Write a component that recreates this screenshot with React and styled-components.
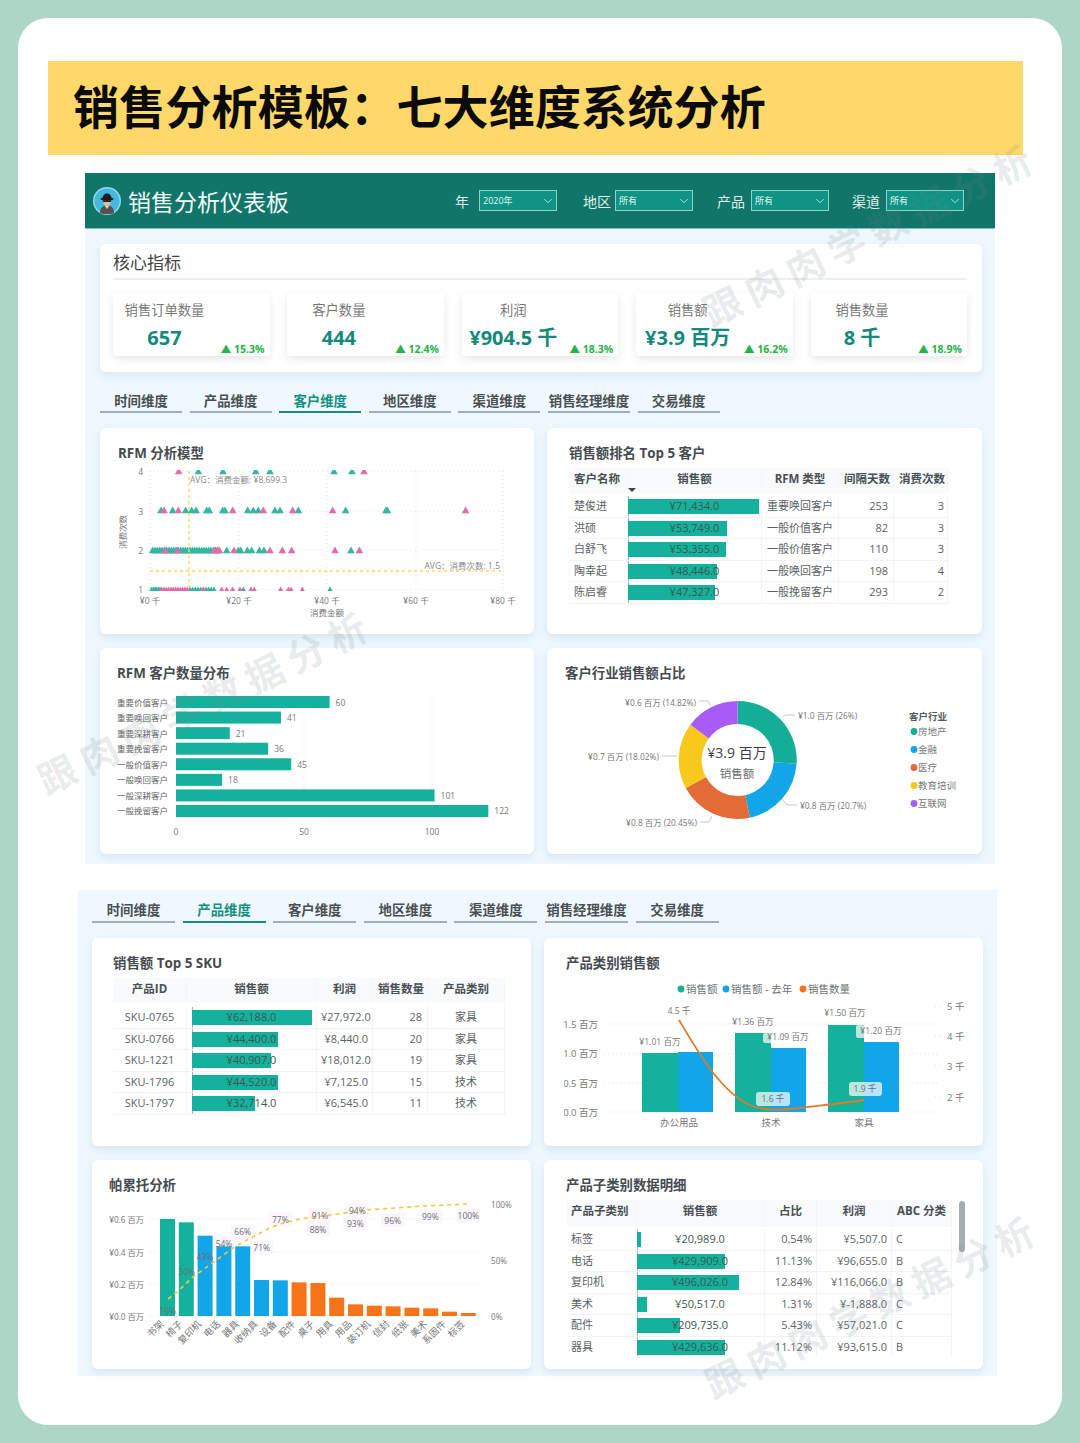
import React from "react";
import styled, { createGlobalStyle } from "styled-components";
import { ChevronDown } from "lucide-react";

const TEAL = "#14b29c";
const BLUE = "#12a5e8";
const ORANGE = "#f8741a";

const GlobalStyle = createGlobalStyle`
  html, body { margin: 0; padding: 0; }
  body {
    background: #aed6c6;
    font-family: "Open Sans", "Noto Sans CJK SC", sans-serif;
  }
`;

const Page = styled.div`
  position: relative;
  width: 1080px;
  height: 1443px;
  padding: 18px;
  box-sizing: border-box;
  overflow: hidden;
  background: #aed6c6;
`;

const Sheet = styled.div`
  width: 1044px;
  height: 1407px;
  box-sizing: border-box;
  padding: 43px 39px 0 30px;
  background: #fff;
  border-radius: 30px;
`;

const Banner = styled.h1`
  margin: 0;
  height: 94px;
  padding-left: 25px;
  background: #fed868;
  color: #0a0a0a;
  font-family: "Noto Sans CJK SC", sans-serif;
  font-size: 46px;
  font-weight: 700;
  letter-spacing: 0.2px;
  line-height: 86px;
  white-space: nowrap;
`;

const Dashboard = styled.section`
  box-sizing: border-box;
  width: ${(p) => p.$width}px;
  height: ${(p) => p.$height}px;
  margin-top: ${(p) => p.$top}px;
  margin-left: ${(p) => p.$left}px;
  background: #eff8fe;
`;

const TopBar = styled.header`
  display: flex;
  align-items: center;
  height: 56px;
  box-sizing: border-box;
  padding-left: 8px;
  background: #12756a;
  border-bottom: 1px solid #7cc4b8;
`;

const Logo = styled.svg`
  width: 28px;
  height: 28px;
  flex: none;
`;

const BoardTitle = styled.div`
  margin-left: 7px;
  width: 327px;
  color: #f2fbf9;
  font-size: 23px;
  line-height: 30px;
  font-family: "Noto Sans CJK SC", sans-serif;
  font-weight: 400;
`;

const Filters = styled.div`
  display: flex;
  align-items: center;
`;

const Filter = styled.div`
  display: flex;
  align-items: center;
  gap: ${(p) => p.$gap}px;
  margin-left: ${(p) => p.$left}px;
  color: #dff1ed;
  font-size: 14px;
`;

const Select = styled.div`
  display: flex;
  align-items: center;
  justify-content: space-between;
  width: 78px;
  height: 21px;
  box-sizing: border-box;
  padding: 0 1px 0 3px;
  background: #0f9384;
  border: 1px solid #8fd3c8;
  color: #e8f7f4;
  font-size: 9px;
`;

const Body = styled.div`
  padding: ${(p) => p.$pad};
`;

const CorePanel = styled.div`
  box-sizing: border-box;
  height: 128px;
  padding: 6px 15px 0 13px;
  background: #fff;
  border-radius: 5px;
  box-shadow: 0 4px 10px rgba(120, 160, 190, 0.18);
`;

const CoreTitle = styled.div`
  height: 28px;
  border-bottom: 2px solid #eceeef;
  color: #444;
  font-size: 17px;
  line-height: 26px;
`;

const KpiRow = styled.div`
  display: grid;
  grid-template-columns: repeat(5, 156.5px);
  justify-content: space-between;
  margin-top: 13px;
`;

const Kpi = styled.div`
  position: relative;
  height: 63px;
  background: #fff;
  border-radius: 3px;
  box-shadow: 0 3px 9px rgba(110, 130, 130, 0.18);
`;

const KpiMain = styled.div`
  display: flex;
  flex-direction: column;
  align-items: center;
  width: 103px;
  white-space: nowrap;
`;

const KpiLabel = styled.div`
  margin-top: 6px;
  color: #777;
  font-size: 13.3px;
  line-height: 22px;
`;

const KpiValue = styled.div`
  margin-top: 5px;
  color: #12897a;
  font-size: 20px;
  font-weight: 700;
  line-height: 24px;
`;

const KpiDelta = styled.div`
  position: absolute;
  right: 5px;
  bottom: 0;
  color: #28b24c;
  font-size: 10.5px;
  font-weight: 700;
  line-height: 14px;
  white-space: nowrap;
`;

const Tabs = styled.nav`
  display: grid;
  grid-template-columns: repeat(7, ${(p) => p.$tab}px);
  column-gap: 7.6px;
  margin-top: ${(p) => p.$top}px;
`;

const Tab = styled.div`
  height: ${(p) => p.$height}px;
  box-sizing: border-box;
  border-bottom: 2px solid ${(p) => (p.$active ? "#1a8f80" : "#a4afb5")};
  color: ${(p) => (p.$active ? "#14907f" : "#4a4f52")};
  font-size: 13.4px;
  font-weight: 700;
  line-height: ${(p) => p.$height - 3}px;
  text-align: center;
  white-space: nowrap;
`;

const CardGrid = styled.div`
  display: grid;
  grid-template-columns: ${(p) => p.$cols};
  grid-template-rows: ${(p) => p.$rows};
  column-gap: 13px;
  row-gap: 14px;
  margin-top: 15px;
`;

const Card = styled.div`
  position: relative;
  overflow: hidden;
  background: #fff;
  border-radius: 6px;
  box-shadow: 0 4px 10px rgba(120, 160, 190, 0.2);
`;

const CardTitle = styled.h3`
  margin: 15px 0 5px ${(p) => p.$left}px;
  height: 20px;
  color: #454b50;
  font-size: 13.4px;
  font-weight: 700;
  line-height: 20px;
  white-space: nowrap;
`;

const Chart = styled.svg`
  display: block;
  overflow: visible;
  font-family: "Open Sans", "Noto Sans CJK SC", sans-serif;
`;

const Label = styled.text`
  fill: ${(p) => p.$fill || "#777"};
  font-size: ${(p) => p.$size || 10}px;
  font-weight: ${(p) => p.$weight || 400};
  text-anchor: ${(p) => p.$anchor || "start"};
  dominant-baseline: central;
`;

const GridLine = styled.line`
  stroke: #dcdfe2;
  stroke-width: 1;
  stroke-dasharray: 1 3;
`;

const Table = styled.div`
  position: relative;
  width: ${(p) => p.$width}px;
  height: ${(p) => p.$height}px;
  margin-top: ${(p) => p.$top || 0}px;
  margin-left: ${(p) => p.$left}px;
  overflow: hidden;
`;

const HeadRow = styled.div`
  display: grid;
  grid-template-columns: ${(p) => p.$cols};
  height: ${(p) => p.$height || 25}px;
  margin-bottom: ${(p) => p.$gap}px;
  background: #f8fafc;
  color: #4a4f54;
  font-size: 11.5px;
  font-weight: 700;
  line-height: 22px;
`;

const Row = styled.div`
  display: grid;
  grid-template-columns: ${(p) => p.$cols};
  height: 21.5px;
  box-sizing: border-box;
  border-bottom: 1px solid #f1f4f6;
  color: #5c6266;
  font-size: 11px;
  line-height: 20.5px;
`;

const Cell = styled.div`
  position: relative;
  box-sizing: border-box;
  padding: 0 ${(p) => p.$pad ?? 5}px;
  border-right: 1px solid #f3f5f7;
  text-align: ${(p) => p.$align || "left"};
  white-space: nowrap;
`;

const SortMark = styled.span`
  position: absolute;
  left: 0;
  bottom: 1px;
  width: 0;
  height: 0;
  border-left: 4px solid transparent;
  border-right: 4px solid transparent;
  border-top: 4px solid #444;
`;

const BarCell = styled.div`
  position: relative;
  border-right: 1px solid #f3f5f7;
  text-align: center;
  white-space: nowrap;
  &::before {
    content: "";
    position: absolute;
    left: ${(p) => p.$inset}px;
    top: 0;
    bottom: 0;
    border-left: 1px dashed #aab0b3;
  }
`;

const Bar = styled.div`
  position: absolute;
  left: ${(p) => p.$inset}px;
  top: 3px;
  height: 15px;
  background: ${TEAL};
`;

const BarValue = styled.span`
  position: relative;
  color: #3f5552;
`;

const ScrollThumb = styled.div`
  position: absolute;
  left: 415px;
  top: 41px;
  width: 6px;
  height: 51px;
  border-radius: 3px;
  background: #a9adb0;
`;

const Watermark = styled.div`
  position: absolute;
  left: ${(p) => p.$x}px;
  top: ${(p) => p.$y}px;
  transform: translate(-50%, -50%) rotate(-26deg);
  color: rgba(110, 135, 135, 0.17);
  font-family: "Noto Sans CJK SC", sans-serif;
  font-size: 38px;
  font-weight: 700;
  letter-spacing: 8px;
  white-space: nowrap;
  pointer-events: none;
`;

const FILTERS = [
  { label: "年", value: "2020年", gap: 10, left: 0 },
  { label: "地区", value: "所有", gap: 4, left: 26 },
  { label: "产品", value: "所有", gap: 6, left: 24 },
  { label: "渠道", value: "所有", gap: 6, left: 23 },
];

const KPIS = [
  { label: "销售订单数量", value: "657", delta: "15.3%" },
  { label: "客户数量", value: "444", delta: "12.4%" },
  { label: "利润", value: "¥904.5 千", delta: "18.3%" },
  { label: "销售额", value: "¥3.9 百万", delta: "16.2%" },
  { label: "销售数量", value: "8 千", delta: "18.9%" },
];

const TAB_NAMES = ["时间维度", "产品维度", "客户维度", "地区维度", "渠道维度", "销售经理维度", "交易维度"];

const TOP_CUSTOMERS = [
  ["楚俊进", 71434, "重要唤回客户", 253, 3],
  ["洪硕", 53749, "一般价值客户", 82, 3],
  ["白舒飞", 53355, "一般价值客户", 110, 3],
  ["陶幸起", 48446, "一般唤回客户", 198, 4],
  ["陈启睿", 47327, "一般挽留客户", 293, 2],
];

const TOP_SKUS = [
  ["SKU-0765", 62188, "¥27,972.0", 28, "家具"],
  ["SKU-0766", 44400, "¥8,440.0", 20, "家具"],
  ["SKU-1221", 40907, "¥18,012.0", 19, "家具"],
  ["SKU-1796", 44520, "¥7,125.0", 15, "技术"],
  ["SKU-1797", 32714, "¥6,545.0", 11, "技术"],
];

const SUBCATEGORIES = [
  ["标签", 20989, "0.54%", "¥5,507.0", "C"],
  ["电话", 429909, "11.13%", "¥96,655.0", "B"],
  ["复印机", 496026, "12.84%", "¥116,066.0", "B"],
  ["美术", 50517, "1.31%", "¥-1,888.0", "C"],
  ["配件", 209735, "5.43%", "¥57,021.0", "C"],
  ["器具", 429636, "11.12%", "¥93,615.0", "B"],
];

const money = (n) => "¥" + n.toLocaleString("en-US") + ".0";

function DataBar({ value, max, full, inset }) {
  return (
    <BarCell $inset={inset}>
      <Bar $inset={inset} style={{ width: (value / max) * full }} />
      <BarValue>{money(value)}</BarValue>
    </BarCell>
  );
}

function Logomark() {
  return (
    <Logo viewBox="0 0 28 28">
      <circle cx="14" cy="14" r="14" fill="#8fdcec" />
      <circle cx="14" cy="14" r="12.6" fill="#45b9dd" />
      <path d="M7 26c0-5 2.5-7.5 7-7.5s7 2.5 7 7.5c-4 1.6-10 1.6-14 0z" fill="#55524c" />
      <path d="M11.5 18.5l2.5 3.5 2.5-3.5z" fill="#d9d2c6" />
      <ellipse cx="14" cy="14.5" rx="3.8" ry="4.6" fill="#e3bd98" />
      <path d="M10 13.4h8v1.6h-8z" fill="#222" />
      <ellipse cx="14" cy="12" rx="6.6" ry="1.7" fill="#1d1d1f" />
      <path d="M9.6 12c-.5-7.4 9.3-7.4 8.8 0z" fill="#1d1d1f" />
    </Logo>
  );
}

/* scatter positions, x in plot units, row = 消费次数 */
const range = (from, to, step) => {
  const out = [];
  for (let v = from; v <= to; v += step) out.push(v);
  return out;
};

const px = (z) => 90 + z / 3;

const SCATTER = [
  { y: 471, color: "#e36bab", xs: [266, 822] },
  { y: 471, color: "#36b5a2", xs: [325, 399, 497, 540, 732, 786] },
  { y: 510, color: "#36b5a2", xs: [213, 248, 287, 305, 318, 350, 358, 398, 405, 473, 490, 505, 555, 570, 625, 767, 888, 892] },
  { y: 510, color: "#e36bab", xs: [222, 265, 428, 520, 608, 728, 1127] },
  { y: 550, color: "#36b5a2", xs: [...range(188, 385, 7), 410, 445, 452, 472, 485, 508, 522, 783] },
  { y: 550, color: "#e36bab", xs: [225, 262, 372, 382, 388, 432, 540, 577, 605, 735, 808] },
  { y: 590, color: "#36b5a2", xs: [...range(185, 210, 5), ...range(300, 378, 8), 460, 720] },
  { y: 590, color: "#e36bab", xs: [...range(215, 295, 7), 340, 395, 410, 428, 450, 483, 493, 572, 595, 603, 637] },
];

function RfmScatter() {
  return (
    <Chart width="434" height="166" viewBox="100 468 434 166">
      <defs>
        <clipPath id="plot">
          <rect x="140" y="470" width="370" height="121" />
        </clipPath>
      </defs>
      {[471, 511, 550, 590].map((y) => (
        <GridLine key={y} x1="150" x2="503" y1={y} y2={y} />
      ))}
      {[150, 239, 327, 416, 503].map((x) => (
        <GridLine key={x} x1={x} x2={x} y1="471" y2="590" />
      ))}
      {[["4", 471], ["3", 511], ["2", 550], ["1", 589]].map(([t, y]) => (
        <Label key={t} x="143" y={y} $anchor="end" $size={8.5}>{t}</Label>
      ))}
      {[["¥0 千", 150], ["¥20 千", 239], ["¥40 千", 327], ["¥60 千", 416], ["¥80 千", 503]].map(([t, x]) => (
        <Label key={t} x={x} y="600" $anchor="middle" $size={8.5}>{t}</Label>
      ))}
      <Label x="327" y="612" $anchor="middle" $size={8.5}>消费金额</Label>
      <Label x="0" y="0" $anchor="middle" $size={8.5} transform="translate(122 532) rotate(-90)">消费次数</Label>
      <g clipPath="url(#plot)">
        {SCATTER.map((s, i) =>
          s.xs.map((z, j) => {
            const x = px(z);
            return (
              <polygon
                key={i + "-" + j}
                points={`${x - 3.8},${s.y + 3.2} ${x + 3.8},${s.y + 3.2} ${x},${s.y - 3.6}`}
                fill={s.color}
              />
            );
          })
        )}
      </g>
      <line x1="189" x2="189" y1="471" y2="590" stroke="#fdd663" strokeWidth="1.4" strokeDasharray="3 3" />
      <line x1="150" x2="503" y1="571" y2="571" stroke="#fdd663" strokeWidth="1.4" strokeDasharray="3 3" />
      <Label x="190" y="479" $size={8.5} $fill="#888">AVG：消费金额: ¥8,699.3</Label>
      <Label x="500" y="565" $size={8.5} $fill="#888" $anchor="end">AVG：消费次数: 1.5</Label>
    </Chart>
  );
}

const RFM_COUNTS = [
  ["重要价值客户", 60],
  ["重要唤回客户", 41],
  ["重要深耕客户", 21],
  ["重要挽留客户", 36],
  ["一般价值客户", 45],
  ["一般唤回客户", 18],
  ["一般深耕客户", 101],
  ["一般挽留客户", 122],
];

function RfmBars() {
  return (
    <Chart width="434" height="166" viewBox="100 688 434 166">
      {[304, 432].map((x) => (
        <GridLine key={x} x1={x} x2={x} y1="692" y2="820" />
      ))}
      {RFM_COUNTS.map(([name, n], i) => {
        const y = 702 + i * 15.57;
        return (
          <g key={name}>
            <Label x="168" y={y} $anchor="end" $size={8.5} $fill="#666">{name}</Label>
            <rect x="176" y={y - 6} width={n * 2.56} height="12" fill={TEAL} />
            <Label x={176 + n * 2.56 + 6} y={y} $size={8.5} $fill="#777">{n}</Label>
          </g>
        );
      })}
      {[["0", 176], ["50", 304], ["100", 432]].map(([t, x]) => (
        <Label key={t} x={x} y="831" $anchor="middle" $size={8.5}>{t}</Label>
      ))}
    </Chart>
  );
}

const INDUSTRIES = [
  { name: "房地产", share: 26, color: "#14ae98" },
  { name: "金融", share: 20.7, color: BLUE },
  { name: "医疗", share: 20.45, color: "#e36b35" },
  { name: "教育培训", share: 18.02, color: "#f8c91c" },
  { name: "互联网", share: 14.82, color: "#a75cf5" },
];

const polar = (cx, cy, r, deg) => {
  const a = ((deg - 90) * Math.PI) / 180;
  return [cx + r * Math.cos(a), cy + r * Math.sin(a)];
};

const ringSlice = (cx, cy, r0, r1, a0, a1) => {
  const large = a1 - a0 > 180 ? 1 : 0;
  const [x1, y1] = polar(cx, cy, r1, a0);
  const [x2, y2] = polar(cx, cy, r1, a1);
  const [x3, y3] = polar(cx, cy, r0, a1);
  const [x4, y4] = polar(cx, cy, r0, a0);
  return `M${x1} ${y1}A${r1} ${r1} 0 ${large} 1 ${x2} ${y2}L${x3} ${y3}A${r0} ${r0} 0 ${large} 0 ${x4} ${y4}Z`;
};

function IndustryDonut() {
  let angle = 0;
  return (
    <Chart width="435" height="166" viewBox="547 688 435 166">
      {INDUSTRIES.map((d) => {
        const start = angle;
        angle += (d.share / 100) * 360;
        return <path key={d.name} d={ringSlice(737.7, 760, 36, 59, start, angle)} fill={d.color} />;
      })}
      <Label x="737" y="752" $anchor="middle" $size={14} $fill="#3d4144">¥3.9 百万</Label>
      <Label x="737" y="773" $anchor="middle" $size={11.5} $fill="#6a6f73">销售额</Label>
      <polyline points="782,718 785,715 795,715" fill="none" stroke="#c4c7c9" />
      <Label x="798" y="715" $size={8.4}>¥1.0 百万 (26%)</Label>
      <polyline points="782,799 787,805 797,805" fill="none" stroke="#c4c7c9" />
      <Label x="800" y="805" $size={8.4}>¥0.8 百万 (20.7%)</Label>
      <polyline points="712,816 709,822 700,822" fill="none" stroke="#c4c7c9" />
      <Label x="697" y="822" $anchor="end" $size={8.4}>¥0.8 百万 (20.45%)</Label>
      <polyline points="662,756 677,756" fill="none" stroke="#c4c7c9" />
      <Label x="659" y="756" $anchor="end" $size={8.4}>¥0.7 百万 (18.02%)</Label>
      <polyline points="699,701 708,701 711,706" fill="none" stroke="#c4c7c9" />
      <Label x="696" y="702" $anchor="end" $size={8.4}>¥0.6 百万 (14.82%)</Label>
      <Label x="909" y="716" $size={9.5} $weight={700} $fill="#55595c">客户行业</Label>
      {INDUSTRIES.map((d, i) => (
        <g key={d.name}>
          <circle cx="914" cy={731.5 + i * 18} r="3.4" fill={d.color} />
          <Label x="918" y={731.5 + i * 18} $size={9.5} $fill="#777">{d.name}</Label>
        </g>
      ))}
    </Chart>
  );
}

const CATEGORY_BARS = [
  { x: 642, top: 1053, w: 36, color: TEAL },
  { x: 678, top: 1052, w: 35, color: BLUE },
  { x: 735, top: 1033, w: 36, color: TEAL },
  { x: 771, top: 1048, w: 35, color: BLUE },
  { x: 828, top: 1025, w: 36, color: TEAL },
  { x: 864, top: 1042, w: 35, color: BLUE },
];

function CategoryCombo() {
  return (
    <Chart width="439" height="168" viewBox="544 978 439 168">
      <defs>
        <clipPath id="leftAxis">
          <rect x="564" y="1010" width="42" height="115" />
        </clipPath>
      </defs>
      {[[681, "销售额", TEAL], [726, "销售额 - 去年", BLUE], [803, "销售数量", ORANGE]].map(([x, t, c]) => (
        <g key={t}>
          <circle cx={x} cy="989" r="3.4" fill={c} />
          <Label x={x + 5} y="989" $size={10.5} $fill="#6e7376">{t}</Label>
        </g>
      ))}
      {[1024, 1054, 1083, 1112].map((y) => (
        <GridLine key={y} x1="604" x2="937" y1={y} y2={y} />
      ))}
      {[1006, 1036, 1066, 1097].map((y) => (
        <GridLine key={y} x1="935" x2="941" y1={y} y2={y} />
      ))}
      <g clipPath="url(#leftAxis)">
        {[["1.5 百万", 1024], ["1.0 百万", 1053], ["0.5 百万", 1083], ["0.0 百万", 1112]].map(([t, y]) => (
          <Label key={t} x="598" y={y} $anchor="end" $size={9.5}>{t}</Label>
        ))}
      </g>
      {[["5 千", 1006], ["4 千", 1036], ["3 千", 1066], ["2 千", 1097]].map(([t, y]) => (
        <Label key={t} x="947" y={y} $size={9.5}>{t}</Label>
      ))}
      {CATEGORY_BARS.map((b) => (
        <rect key={b.x} x={b.x} y={b.top} width={b.w} height={1112 - b.top} fill={b.color} />
      ))}
      <rect x="763" y="1033" width="10" height="10" rx="2" fill="#fff" fillOpacity="0.7" />
      <rect x="856" y="1025" width="9" height="13" rx="2" fill="#fff" fillOpacity="0.7" />
      <path
        d="M679 1020C698 1052 722 1094 752 1106C764 1111 782 1110 800 1108C825 1105 845 1103 864 1100"
        fill="none"
        stroke="#df7b2b"
        strokeWidth="1.8"
      />
      <Label x="660" y="1042" $anchor="middle" $size={8.6}>¥1.01 百万</Label>
      <Label x="753" y="1022" $anchor="middle" $size={8.6}>¥1.36 百万</Label>
      <Label x="788" y="1037" $anchor="middle" $size={8.6}>¥1.09 百万</Label>
      <Label x="845" y="1013" $anchor="middle" $size={8.6}>¥1.50 百万</Label>
      <Label x="881" y="1031" $anchor="middle" $size={8.6}>¥1.20 百万</Label>
      <Label x="679" y="1011" $anchor="middle" $size={8.6}>4.5 千</Label>
      <rect x="756" y="1092" width="34" height="14" rx="3" fill="#fff" fillOpacity="0.7" />
      <Label x="773" y="1099" $anchor="middle" $size={8.6} $fill="#66717a">1.6 千</Label>
      <rect x="849" y="1082" width="33" height="14" rx="3" fill="#fff" fillOpacity="0.7" />
      <Label x="865" y="1089" $anchor="middle" $size={8.6} $fill="#66717a">1.9 千</Label>
      {[["办公用品", 679], ["技术", 771], ["家具", 864]].map(([t, x]) => (
        <Label key={t} x={x} y="1122" $anchor="middle" $size={9.5}>{t}</Label>
      ))}
    </Chart>
  );
}

const PARETO = [
  ["书架", 177, TEAL],
  ["椅子", 187, TEAL],
  ["复印机", 227, BLUE],
  ["电话", 259, BLUE],
  ["器具", 259, BLUE],
  ["收纳具", 360, BLUE],
  ["设备", 361, BLUE],
  ["配件", 367, ORANGE],
  ["桌子", 369, ORANGE],
  ["用具", 413, ORANGE],
  ["用品", 433, ORANGE],
  ["装订机", 437, ORANGE],
  ["信封", 439, ORANGE],
  ["纸张", 443, ORANGE],
  ["美术", 445, ORANGE],
  ["系固件", 455, ORANGE],
  ["标签", 459, ORANGE],
];

const PARETO_TAGS = [
  ["16%", 233, 450],
  ["30%", 290, 333],
  ["43%", 345, 290],
  ["54%", 402, 250],
  ["66%", 458, 215],
  ["71%", 515, 263],
  ["77%", 571, 177],
  ["88%", 684, 207],
  ["91%", 690, 165],
  ["93%", 796, 190],
  ["94%", 802, 150],
  ["96%", 908, 180],
  ["99%", 1021, 170],
  ["100%", 1135, 167],
];

function ParetoChart() {
  return (
    <Chart width="439" height="169" viewBox="92 1200 439 169">
      {[1219, 1252, 1284, 1316].map((y) => (
        <GridLine key={y} x1="150" x2="480" y1={y} y2={y} />
      ))}
      {[["¥0.6 百万", 1219], ["¥0.4 百万", 1252], ["¥0.2 百万", 1284], ["¥0.0 百万", 1316]].map(([t, y]) => (
        <Label key={t} x="144" y={y} $anchor="end" $size={8.2}>{t}</Label>
      ))}
      {[["100%", 1204], ["50%", 1260], ["0%", 1316]].map(([t, y]) => (
        <Label key={t} x="491" y={y} $size={8.2}>{t}</Label>
      ))}
      {PARETO_TAGS.map(([t, zx, zy]) => (
        <rect
          key={t}
          x={90 + zx / 3 - 12}
          y={1160 + zy / 3 - 7}
          width="24"
          height="14"
          rx="2"
          fill={zy > 300 ? "none" : "#faf6fb"}
        />
      ))}
      {PARETO.map(([name, top, color], i) => {
        const y = 1160 + top / 3;
        const x = 160 + i * 18.8;
        return (
          <g key={name}>
            <rect x={x} y={y} width="15" height={1316 - y} fill={color} />
            <Label
              x="0"
              y="0"
              $anchor="end"
              $size={9.5}
              $fill="#777"
              transform={`translate(${x + 2} 1322) rotate(-45)`}
            >
              {name}
            </Label>
          </g>
        );
      })}
      <path
        d="M168 1299L177 1292L193 1277L233 1248C250 1238 262 1232 272 1227C290 1220 305 1218 322 1216L367 1210L423 1206L468 1204"
        fill="none"
        stroke="#f0ca3c"
        strokeWidth="1.6"
        strokeDasharray="4 4"
      />
      {PARETO_TAGS.map(([t, zx, zy]) => (
        <Label key={t} x={90 + zx / 3} y={1160 + zy / 3} $anchor="middle" $size={8.5} $fill="#6b6f72">{t}</Label>
      ))}
    </Chart>
  );
}

const TOP_COLS = "59px 134px 77px 55px 54px";
const SKU_COLS = "74px 130px 56px 55px 77px";
const SUB_COLS = "69px 129px 52px 75px 60px";

function App() {
  return (
    <Page>
      <GlobalStyle />
      <Sheet>
        <Banner>销售分析模板：七大维度系统分析</Banner>

        <Dashboard $width={910} $height={691} $top={18} $left={37}>
          <TopBar>
            <Logomark />
            <BoardTitle>销售分析仪表板</BoardTitle>
            <Filters>
              {FILTERS.map((f) => (
                <Filter key={f.label} $gap={f.gap} $left={f.left}>
                  {f.label}
                  <Select>
                    {f.value}
                    <ChevronDown size={14} strokeWidth={1.4} color="#d5f0eb" />
                  </Select>
                </Filter>
              ))}
            </Filters>
          </TopBar>

          <Body $pad="15px 13px 0 15px">
            <CorePanel>
              <CoreTitle>核心指标</CoreTitle>
              <KpiRow>
                {KPIS.map((k) => (
                  <Kpi key={k.label}>
                    <KpiMain>
                      <KpiLabel>{k.label}</KpiLabel>
                      <KpiValue>{k.value}</KpiValue>
                    </KpiMain>
                    <KpiDelta>▲ {k.delta}</KpiDelta>
                  </Kpi>
                ))}
              </KpiRow>
            </CorePanel>

            <Tabs $tab={82} $top={21}>
              {TAB_NAMES.map((t) => (
                <Tab key={t} $height={20} $active={t === "客户维度"}>{t}</Tab>
              ))}
            </Tabs>

            <CardGrid $cols="434px 435px" $rows="206px 206px">
              <Card>
                <CardTitle $left={18}>RFM 分析模型</CardTitle>
                <RfmScatter />
              </Card>
              <Card>
                <CardTitle $left={22}>销售额排名 Top 5 客户</CardTitle>
                <Table $left={22} $width={380} $height={136}>
                  <HeadRow $cols={TOP_COLS} $gap={3}>
                    <Cell>客户名称</Cell>
                    <Cell $align="center">
                      销售额
                      <SortMark />
                    </Cell>
                    <Cell $align="center">RFM 类型</Cell>
                    <Cell $align="right">间隔天数</Cell>
                    <Cell $align="right">消费次数</Cell>
                  </HeadRow>
                  {TOP_CUSTOMERS.map((c) => (
                    <Row key={c[0]} $cols={TOP_COLS}>
                      <Cell>{c[0]}</Cell>
                      <DataBar value={c[1]} max={71434} full={131} inset={0} />
                      <Cell $align="center" $pad={0}>{c[2]}</Cell>
                      <Cell $align="right">{c[3]}</Cell>
                      <Cell $align="right" $pad={3}>{c[4]}</Cell>
                    </Row>
                  ))}
                </Table>
              </Card>
              <Card>
                <CardTitle $left={17}>RFM 客户数量分布</CardTitle>
                <RfmBars />
              </Card>
              <Card>
                <CardTitle $left={18}>客户行业销售额占比</CardTitle>
                <IndustryDonut />
              </Card>
            </CardGrid>
          </Body>
        </Dashboard>

        <Dashboard $width={919} $height={486} $top={26} $left={30}>
          <Body $pad="11px 0 0 14px">
            <Tabs $tab={83} $top={0}>
              {TAB_NAMES.map((t) => (
                <Tab key={t} $height={22} $active={t === "产品维度"}>{t}</Tab>
              ))}
            </Tabs>

            <CardGrid $cols="439px 439px" $rows="208px 209px">
              <Card>
                <CardTitle $left={21}>销售额 Top 5 SKU</CardTitle>
                <Table $left={21} $width={392} $height={138}>
                  <HeadRow $cols={SKU_COLS} $gap={4}>
                    <Cell $align="center">产品ID</Cell>
                    <Cell $align="center">销售额</Cell>
                    <Cell $align="center" $pad={0}>利润</Cell>
                    <Cell $align="right">销售数量</Cell>
                    <Cell $align="center">产品类别</Cell>
                  </HeadRow>
                  {TOP_SKUS.map((s) => (
                    <Row key={s[0]} $cols={SKU_COLS}>
                      <Cell $align="center">{s[0]}</Cell>
                      <DataBar value={s[1]} max={62188} full={120} inset={5} />
                      <Cell $align="right" $pad={4}>{s[2]}</Cell>
                      <Cell $align="right">{s[3]}</Cell>
                      <Cell $align="center">{s[4]}</Cell>
                    </Row>
                  ))}
                </Table>
              </Card>
              <Card>
                <CardTitle $left={22}>产品类别销售额</CardTitle>
                <CategoryCombo />
              </Card>
              <Card>
                <CardTitle $left={17}>帕累托分析</CardTitle>
                <ParetoChart />
              </Card>
              <Card>
                <CardTitle $left={22}>产品子类别数据明细</CardTitle>
                <Table $left={23} $top={1} $width={385} $height={156}>
                  <HeadRow $cols={SUB_COLS} $height={27} $gap={2}>
                    <Cell $pad={4}>产品子类别</Cell>
                    <Cell $align="center">销售额</Cell>
                    <Cell $align="center">占比</Cell>
                    <Cell $align="center">利润</Cell>
                    <Cell $align="center" $pad={0}>ABC 分类</Cell>
                  </HeadRow>
                  {SUBCATEGORIES.map((s) => (
                    <Row key={s[0]} $cols={SUB_COLS}>
                      <Cell $pad={4}>{s[0]}</Cell>
                      <DataBar value={s[1]} max={496026} full={102} inset={1} />
                      <Cell $align="right" $pad={4}>{s[2]}</Cell>
                      <Cell $align="right" $pad={4}>{s[3]}</Cell>
                      <Cell $pad={4}>{s[4]}</Cell>
                    </Row>
                  ))}
                </Table>
                <ScrollThumb />
              </Card>
            </CardGrid>
          </Body>
        </Dashboard>
      </Sheet>

      <Watermark $x={870} $y={232}>跟肉肉学数据分析</Watermark>
      <Watermark $x={205} $y={700}>跟肉肉学数据分析</Watermark>
      <Watermark $x={872} $y={1304}>跟肉肉学数据分析</Watermark>
    </Page>
  );
}

export default App;
